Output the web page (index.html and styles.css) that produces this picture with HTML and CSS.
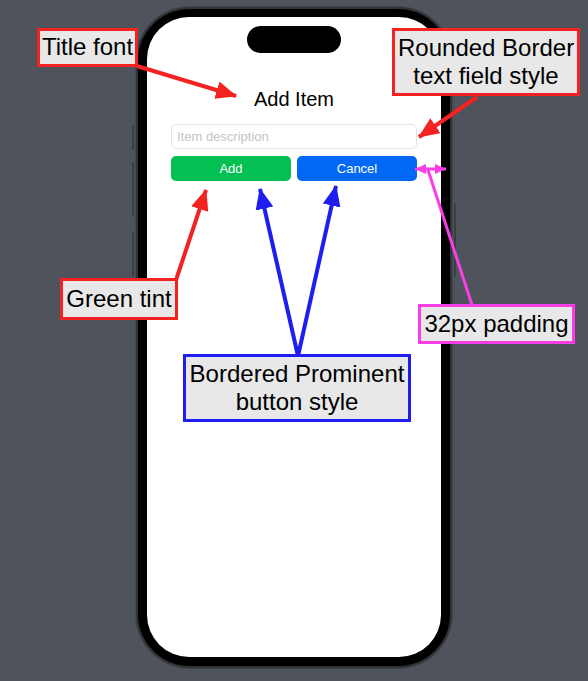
FILE: index.html
```html
<!DOCTYPE html>
<html>
<head>
<meta charset="utf-8">
<title>Add Item</title>
<link rel="stylesheet" href="styles.css">
</head>
<body>
<div class="canvas">
  <div class="phone">
    <span class="side-btn side-l1"></span>
    <span class="side-btn side-l2"></span>
    <span class="side-btn side-l3"></span>
    <span class="side-btn side-r1"></span>
    <div class="screen">
      <div class="island"></div>
      <h1 class="title">Add Item</h1>
      <input class="field" type="text" placeholder="Item description">
      <div class="actions">
        <button class="btn btn-green">Add</button>
        <button class="btn btn-blue">Cancel</button>
      </div>
    </div>
  </div>

  <svg class="arrows" width="588" height="681" viewBox="0 0 588 681">
    <defs>
      <marker id="hr" markerUnits="userSpaceOnUse" markerWidth="22" markerHeight="20" refX="20" refY="9" orient="auto">
        <path d="M0 0 L21 9 L0 18 Z" fill="#f52222"/>
      </marker>
      <marker id="hb" markerUnits="userSpaceOnUse" markerWidth="22" markerHeight="20" refX="20" refY="9" orient="auto">
        <path d="M0 0 L21 9 L0 18 Z" fill="#1e1ef0"/>
      </marker>
      <marker id="hm" markerUnits="userSpaceOnUse" markerWidth="12" markerHeight="12" refX="11" refY="5" orient="auto-start-reverse">
        <path d="M0 0 L11 5 L0 10 Z" fill="#fa3ee6"/>
      </marker>
    </defs>
    <g stroke-width="4" fill="none">
      <line x1="137" y1="66" x2="236" y2="96" stroke="#f52222" marker-end="url(#hr)"/>
      <line x1="477" y1="97" x2="419" y2="137" stroke="#f52222" marker-end="url(#hr)"/>
      <line x1="176" y1="280" x2="206" y2="190" stroke="#f52222" marker-end="url(#hr)"/>
      <line x1="298" y1="356" x2="260" y2="189" stroke="#1e1ef0" marker-end="url(#hb)"/>
      <line x1="298" y1="356" x2="336" y2="186" stroke="#1e1ef0" marker-end="url(#hb)"/>
    </g>
    <g stroke="#fa3ee6" stroke-width="3" fill="none">
      <line x1="415" y1="169" x2="446" y2="169" marker-start="url(#hm)" marker-end="url(#hm)"/>
      <line x1="428" y1="170" x2="472" y2="305"/>
    </g>
  </svg>

  <div class="note note-red note-title">Title font</div>
  <div class="note note-red note-field">Rounded Border<br>text field style</div>
  <div class="note note-red note-tint">Green tint</div>
  <div class="note note-magenta note-pad">32px padding</div>
  <div class="note note-blue note-style">Bordered Prominent<br>button style</div>
</div>
</body>
</html>
```

FILE: styles.css
```css
html, body {
  margin: 0;
  padding: 0;
  background: #4f535b;
}

body {
  font-family: "Liberation Sans", Arial, sans-serif;
}

.canvas {
  position: relative;
  width: 588px;
  height: 681px;
  box-sizing: border-box;
  padding-top: 7px;
  display: flex;
  justify-content: center;
  align-items: flex-start;
  overflow: hidden;
}

.phone {
  position: relative;
  width: 316px;
  height: 661px;
  box-sizing: border-box;
  padding: 8px 9px 9px;
  background: #000;
  border: 2px solid #303236;
  border-radius: 54px;
  box-shadow: 0 0 0 1px #44474d;
}

.side-btn {
  position: absolute;
  width: 2px;
  background: #3a3d42;
  border-radius: 1px;
}
.side-l1 { left: -6px; top: 116px; height: 25px; }
.side-l2 { left: -6px; top: 153px; height: 55px; }
.side-l3 { left: -6px; top: 223px; height: 45px; }
.side-r1 { right: -6px; top: 194px; height: 74px; }

.screen {
  height: 100%;
  box-sizing: border-box;
  background: #fff;
  border-radius: 42px;
  padding: 9px 24px 0;
  display: flex;
  flex-direction: column;
}

.island {
  width: 94px;
  height: 27px;
  margin: 0 auto;
  background: #000;
  border-radius: 14px;
}

.title {
  margin: 35px 0 0;
  font-size: 20px;
  line-height: 23px;
  font-weight: 400;
  text-align: center;
  color: #000;
}

.field {
  margin: 13px 0 0;
  height: 25px;
  box-sizing: border-box;
  border: 1px solid #e4e4e7;
  border-radius: 5px;
  padding: 0 5px;
  font-family: "Liberation Sans", Arial, sans-serif;
  font-size: 13px;
  color: #000;
  background: #fff;
  outline: none;
}
.field::placeholder {
  color: #c4c4c8;
}

.actions {
  margin-top: 7px;
  display: flex;
  gap: 6px;
}

.btn {
  flex: 1;
  height: 25px;
  border: none;
  border-radius: 5px;
  font-family: "Liberation Sans", Arial, sans-serif;
  font-size: 13px;
  color: #fff;
  padding: 0;
}
.btn-green { background: #02c152; }
.btn-blue { background: #0068f5; }

.arrows {
  position: absolute;
  left: 0;
  top: 0;
}

.note {
  position: absolute;
  box-sizing: border-box;
  padding: 3px 3px;
  background: #e8e8e8;
  border: 3px solid;
  font-size: 24px;
  line-height: 28px;
  color: #000;
  text-align: center;
  white-space: nowrap;
}
.note-red { border-color: #f52222; }
.note-blue { border-color: #1e1ef0; }
.note-magenta { border-color: #fa3ee6; }

.note-title { left: 37px; top: 28px; width: 101px; padding: 2px 0 3px; }
.note-field { left: 392px; top: 28px; width: 188px; }
.note-tint { left: 60px; top: 278px; width: 118px; padding: 4px 3px; }
.note-pad { left: 418px; top: 304px; width: 157px; }
.note-style { left: 183px; top: 354px; width: 228px; }
```
